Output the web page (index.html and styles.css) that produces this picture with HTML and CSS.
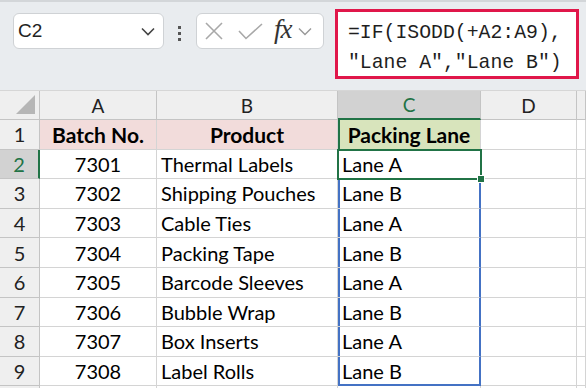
FILE: index.html
```html
<!DOCTYPE html>
<html lang="en">
<head>
    <meta charset="UTF-8">
    <title>Packing Lane</title>
    <link rel="stylesheet" href="styles.css">
</head>
<body>
    <div class="toolbar">
        <div class="namebox">
            <span>C2</span>
            <svg width="14" height="9" viewBox="0 0 14 9"><polyline points="1,1.5 7,7.5 13,1.5" fill="none" stroke="#444" stroke-width="1.6"/></svg>
        </div>
        <div class="dots"><i></i><i></i><i></i></div>
        <div class="fxbox">
            <svg width="18" height="18" viewBox="0 0 18 18"><path d="M1 1 L17 17 M17 1 L1 17" stroke="#a8a8a8" stroke-width="1.6" fill="none"/></svg>
            <svg width="25" height="17" viewBox="0 0 25 17"><polyline points="1,8 8,15.5 24,1" fill="none" stroke="#a8a8a8" stroke-width="1.6"/></svg>
            <span class="fx">fx</span>
            <svg width="14" height="9" viewBox="0 0 14 9"><polyline points="1,1.5 7,7.5 13,1.5" fill="none" stroke="#999" stroke-width="1.4"/></svg>
        </div>
        <div class="formula">
            <div class="formula-text">=IF(ISODD(+A2:A9),<br>"Lane A","Lane B")</div>
        </div>
    </div>

    <div class="sheet">
        <div class="h corner"><span class="tri"></span></div>
        <div class="h">A</div>
        <div class="h">B</div>
        <div class="h h-sel">C</div>
        <div class="h">D</div>
        <div class="h"></div>

        <div class="rh">1</div>
        <div class="c title pink">Batch No.</div>
        <div class="c title pink">Product</div>
        <div class="c title green">Packing Lane</div>
        <div class="c"></div>
        <div class="c"></div>

        <div class="rh rh-sel">2</div>
        <div class="c num">7301</div>
        <div class="c">Thermal Labels</div>
        <div class="c lane active">Lane A</div>
        <div class="c"></div>
        <div class="c"></div>

        <div class="rh">3</div>
        <div class="c num">7302</div>
        <div class="c">Shipping Pouches</div>
        <div class="c lane">Lane B</div>
        <div class="c"></div>
        <div class="c"></div>

        <div class="rh">4</div>
        <div class="c num">7303</div>
        <div class="c">Cable Ties</div>
        <div class="c lane">Lane A</div>
        <div class="c"></div>
        <div class="c"></div>

        <div class="rh">5</div>
        <div class="c num">7304</div>
        <div class="c">Packing Tape</div>
        <div class="c lane">Lane B</div>
        <div class="c"></div>
        <div class="c"></div>

        <div class="rh">6</div>
        <div class="c num">7305</div>
        <div class="c">Barcode Sleeves</div>
        <div class="c lane">Lane A</div>
        <div class="c"></div>
        <div class="c"></div>

        <div class="rh">7</div>
        <div class="c num">7306</div>
        <div class="c">Bubble Wrap</div>
        <div class="c lane">Lane B</div>
        <div class="c"></div>
        <div class="c"></div>

        <div class="rh">8</div>
        <div class="c num">7307</div>
        <div class="c">Box Inserts</div>
        <div class="c lane">Lane A</div>
        <div class="c"></div>
        <div class="c"></div>

        <div class="rh">9</div>
        <div class="c num">7308</div>
        <div class="c">Label Rolls</div>
        <div class="c lane last">Lane B</div>
        <div class="c"></div>
        <div class="c"></div>

        <div class="rh"></div>
        <div class="c"></div>
        <div class="c"></div>
        <div class="c"></div>
        <div class="c"></div>
        <div class="c"></div>
    </div>
</body>
</html>
```

FILE: styles.css
```css
body {
    margin: 0;
    padding: 0;
    background-color: #fff;
    font-family: 'Lato', 'Noto Sans', sans-serif;
    overflow: hidden;
}
.toolbar {
    height: 88px;
    background-color: #e9ecef;
    border-top: 2px solid #d3d6d9;
    display: flex;
    align-items: flex-start;
}
.namebox {
    margin: 11px 0 0 13px;
    width: 151px;
    height: 36px;
    box-sizing: border-box;
    background-color: #fff;
    border: 1px solid #cfd2d5;
    border-radius: 6px;
    display: flex;
    align-items: center;
    justify-content: space-between;
    padding: 0 8px 0 4px;
    font-family: 'Liberation Sans', sans-serif;
    font-size: 19px;
    color: #222;
}
.dots {
    margin: 14px 0 0 14px;
    width: 4px;
    display: flex;
    flex-direction: column;
    gap: 3px;
    padding-top: 10px;
}
.dots i {
    display: block;
    width: 3px;
    height: 3px;
    background-color: #555;
}
.fxbox {
    margin: 11px 0 0 14px;
    width: 128px;
    height: 36px;
    box-sizing: border-box;
    background-color: #fff;
    border: 1px solid #cfd2d5;
    border-radius: 6px;
    display: flex;
    align-items: center;
    padding: 0 3px 0 8px;
}
.fxbox svg:nth-child(2) {
    margin-left: 15px;
}
.fx {
    margin-left: 11px;
    margin-top: -4px;
    font-family: 'Liberation Serif', serif;
    font-style: italic;
    font-size: 27px;
    letter-spacing: -1px;
    color: #333;
}
.fxbox svg:last-child {
    margin-left: 6px;
}
.formula {
    margin: 7px 0 0 11px;
    width: 244px;
    height: 70px;
    box-sizing: border-box;
    background-color: #fff;
    border: 3px solid #e0174a;
    padding: 6px 0 0 10px;
}
.formula-text {
    font-family: 'Liberation Mono', 'DejaVu Sans Mono', monospace;
    font-size: 19.8px;
    line-height: 30px;
    color: #1e1e1e;
    white-space: nowrap;
}
.sheet {
    display: grid;
    grid-template-columns: 40px 117px 181px 143px 96px 9px;
    grid-template-rows: 29px repeat(9, 29.6px) 12px;
    border-top: 1px solid #d6d6d6;
    font-size: 20px;
    color: #000;
}
.h, .rh {
    background-color: #efefef;
    border-right: 1px solid #c4c4c4;
    border-bottom: 1px solid #c4c4c4;
    display: flex;
    align-items: center;
    justify-content: center;
    color: #222;
    box-sizing: border-box;
}
.h {
    font-size: 19px;
}
.corner {
    position: relative;
}
.tri {
    position: absolute;
    right: 4px;
    bottom: 5px;
    width: 19px;
    height: 19px;
    background-color: #b6b6b6;
    clip-path: polygon(100% 0, 100% 100%, 0 100%);
}
.h-sel {
    background-color: #d2d2d2;
    color: #217346;
    border-bottom: 2px solid #217346;
}
.rh-sel {
    background-color: #d2d2d2;
    color: #217346;
    border-right: 2px solid #217346;
}
.c {
    border-right: 1px solid #d4d4d4;
    border-bottom: 1px solid #d4d4d4;
    box-sizing: border-box;
    display: flex;
    align-items: center;
    padding-left: 4px;
    white-space: nowrap;
    overflow: hidden;
}
.num {
    justify-content: center;
    padding-left: 0;
}
.title {
    font-weight: bold;
    font-size: 21px;
    justify-content: center;
    padding-left: 0;
}
.pink {
    background-color: #f2dcdb;
}
.green {
    background-color: #d8e4bc;
    box-shadow: inset 2px 0 #217346;
}
.lane {
    border-right: 2px solid #4472c4;
    box-shadow: inset 2px 0 #4472c4;
}
.last {
    border-bottom: 2px solid #4472c4;
}
.active {
    position: relative;
    overflow: visible;
    border-right: 1px solid #d4d4d4;
    box-shadow: none;
    outline: 2px solid #217346;
    outline-offset: -1px;
    z-index: 2;
}
.active::after {
    content: "";
    position: absolute;
    right: -5px;
    bottom: -5px;
    width: 6px;
    height: 6px;
    background-color: #217346;
    border: 1px solid #fff;
}
```
